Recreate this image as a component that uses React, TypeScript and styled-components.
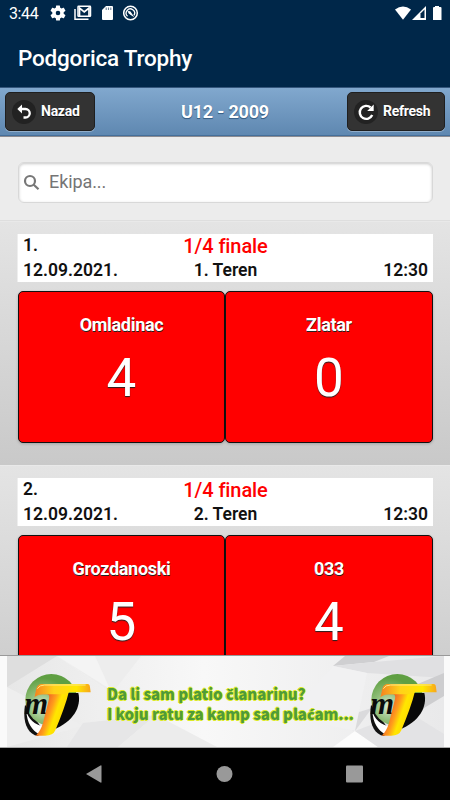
import React from "react";
import styled, { createGlobalStyle } from "styled-components";

const GlobalStyle = createGlobalStyle`
  * { box-sizing: border-box; }
  body { margin: 0; background: #000; font-family: Roboto, sans-serif; }
`;

const Screen = styled.div`
  width: 450px;
  height: 800px;
  overflow: hidden;
  display: flex;
  flex-direction: column;
`;

const StatusBar = styled.div`
  flex: none;
  height: 28px;
  padding: 0 7px 0 9px;
  background: #002749;
  color: #fff;
  display: flex;
  align-items: center;
  svg { display: block; flex: none; }
`;

const Clock = styled.span`
  width: 41px;
  font-size: 16px;
  line-height: 28px;
  letter-spacing: -0.4px;
`;

const StatusIcons = styled.div<{ $gap: number; $end?: boolean }>`
  display: flex;
  align-items: center;
  gap: ${(p) => p.$gap}px;
  margin-left: ${(p) => (p.$end ? "auto" : "0")};
  margin-top: -2px;
`;

const TitleBar = styled.div`
  flex: none;
  height: 59px;
  padding: 0 18px;
  background: #002749;
  color: #fff;
  font-size: 22.5px;
  font-weight: 500;
  line-height: 60px;
  letter-spacing: -0.2px;
`;

const Header = styled.header`
  flex: none;
  height: 50px;
  padding: 4px 5px 0 5px;
  display: grid;
  grid-template-columns: 1fr auto 1fr;
  border-top: 1px solid #35577d;
  border-bottom: 1px solid #8b8b91;
  box-shadow: inset 0 -1px 0 #456f9a;
  background: linear-gradient(#81a8ce, #5e87b0);
`;

const Heading = styled.h1`
  margin: 0;
  color: #fff;
  font-size: 18px;
  font-weight: 700;
  line-height: 40px;
  letter-spacing: -0.2px;
  text-shadow: 0 1px 1px #3e6790, 0 1px 0 #24405e;
`;

const ToolButton = styled.button<{ $width: number; $end?: boolean }>`
  width: ${(p) => p.$width}px;
  justify-self: ${(p) => (p.$end ? "end" : "start")};
  height: 39px;
  padding: 0 0 0 6px;
  display: flex;
  align-items: center;
  gap: 5px;
  border: 1px solid #1f1f1f;
  border-radius: 5px;
  background: #333;
  box-shadow: 0 1px 0 rgba(255, 255, 255, 0.3);
  color: #fff;
  font: 700 14px/36px Roboto, sans-serif;
  letter-spacing: -0.25px;
  text-shadow: 0 1px 0 #111;
`;

const ButtonLabel = styled.span`
  margin-top: -2px;
`;

const Disc = styled.span`
  flex: none;
  width: 24px;
  height: 24px;
  border-radius: 50%;
  background: #222;
  display: grid;
  place-items: center;
`;

const SearchArea = styled.div`
  flex: none;
  height: 84px;
  padding: 25px 17px 0 18px;
  background: #ececec;
  border-bottom: 1px solid #dedede;
`;

const SearchField = styled.label`
  height: 41px;
  padding-left: 4px;
  display: flex;
  align-items: center;
  gap: 9px;
  background: #fff;
  border: 1px solid #d8d8d8;
  border-radius: 6px;
  box-shadow: inset 0 1px 3px rgba(0, 0, 0, 0.22);
`;

const SearchInput = styled.input`
  flex: 1;
  min-width: 0;
  padding: 0;
  margin-top: -2px;
  border: 0;
  outline: 0;
  background: transparent;
  font: 400 18px Roboto, sans-serif;
  letter-spacing: -0.1px;
  color: #333;
  &::placeholder { color: #757575; opacity: 1; }
`;

const MatchList = styled.main`
  flex: 1;
  min-height: 0;
  overflow: hidden;
`;

const MatchItem = styled.section`
  height: 244px;
  padding: 12px 17px 0;
  border-top: 1px solid #e9e9e9;
  background: linear-gradient(#e4e4e4, #c9c9c9);
`;

const MatchInfo = styled.div`
  height: 48px;
  padding: 0 5px 0 5px;
  display: grid;
  grid-template-columns: 1fr 120px 1fr;
  grid-template-rows: 24px 24px;
  background: #fff;
  color: #111;
  font-size: 17.5px;
  font-weight: 600;
  line-height: 23px;
  border-left: 1px solid #eee;
`;

const Stage = styled.span`
  color: #f00;
  font-size: 20px;
  font-weight: 500;
  line-height: 25px;
  letter-spacing: -0.1px;
  text-align: center;
`;

const Cell = styled.span<{ $align?: string }>`
  text-align: ${(p) => p.$align || "left"};
  line-height: ${(p) => (p.$align ? "25px" : "23px")};
`;

const Teams = styled.div`
  margin-top: 9px;
  padding-left: 1px;
  display: grid;
  grid-template-columns: 207px 208px;
`;

const TeamCard = styled.div`
  height: 152px;
  padding-top: 22px;
  border: 1.400px solid #111;
  border-radius: 5px;
  background: #f00;
  box-shadow: 0 1px 3px rgba(0, 0, 0, 0.2);
  color: #fff;
  text-align: center;
  text-shadow: 0 1px 0 #222;
`;

const TeamName = styled.div`
  font-size: 18px;
  font-weight: 700;
  line-height: 22px;
  letter-spacing: -0.3px;
`;

const Score = styled.div`
  margin-top: 14px;
  font-size: 53px;
  line-height: 56px;
  text-shadow: 0 1px 1px #222;
`;

const Banner = styled.aside`
  flex: none;
  height: 93px;
  padding: 0 6px 0 7px;
  background: #fafafa;
  border-top: 1px solid #999;
  border-bottom: 1px solid #aaa;
`;

const BannerCanvas = styled.div`
  position: relative;
  height: 91px;
  display: flex;
  align-items: center;
  justify-content: space-between;
  padding: 0 6px 0 16px;
`;

const Facets = styled.svg`
  position: absolute;
  inset: 0;
  width: 100%;
  height: 100%;
`;

const LogoSvg = styled.svg`
  position: relative;
  display: block;
  flex: none;
  margin-top: 6px;
`;

const Slogan = styled.div`
  position: relative;
  margin-right: auto;
  margin-left: 15px;
  margin-top: 4px;
  color: #4f9a3a;
  font: 900 15px/20px "Noto Sans CJK SC", sans-serif;
  white-space: nowrap;
  text-shadow: 1px 0 0 #dcea28, -1px 0 0 #dcea28, 0 1px 0 #dcea28, 0 -1px 0 #dcea28;
`;

const SloganLine = styled.div`
  height: 20px;
  letter-spacing: -0.05px;
`;

const Accented = styled.span`
  font-family: "Open Sans", sans-serif;
  font-weight: 800;
  font-size: 14px;
`;

const NavBar = styled.nav`
  flex: none;
  height: 52px;
  padding: 0 85px 0 84px;
  display: flex;
  align-items: center;
  justify-content: space-between;
  background: #000;
`;

const matches = [
  { no: "1.", stage: "1/4 finale", date: "12.09.2021.", field: "1. Teren", time: "12:30", teams: [["Omladinac", "4"], ["Zlatar", "0"]] },
  { no: "2.", stage: "1/4 finale", date: "12.09.2021.", field: "2. Teren", time: "12:30", teams: [["Grozdanoski", "5"], ["033", "4"]] },
];

function ClubLogo({ id }: { id: string }) {
  return (
    <LogoSvg width="69" height="64" viewBox="70 85 207 192">
      <defs>
        <radialGradient id={`${id}-ball`} gradientUnits="userSpaceOnUse" cx="128" cy="185" r="85">
          <stop offset="0" stopColor="#dcebd4" />
          <stop offset="0.5" stopColor="#90be79" />
          <stop offset="1" stopColor="#5f9f42" />
        </radialGradient>
        <linearGradient id={`${id}-stem`} gradientUnits="userSpaceOnUse" x1="125" y1="215" x2="190" y2="238">
          <stop offset="0" stopColor="#f26a25" />
          <stop offset="0.3" stopColor="#ff9d1c" />
          <stop offset="0.55" stopColor="#ffe600" />
          <stop offset="1" stopColor="#ffd800" />
        </linearGradient>
        <linearGradient id={`${id}-bar`} x1="0" x2="1">
          <stop offset="0" stopColor="#f58220" />
          <stop offset="0.35" stopColor="#ffd21a" />
          <stop offset="0.75" stopColor="#ffe800" />
          <stop offset="1" stopColor="#f7a51b" />
        </linearGradient>
      </defs>
      <path d="M76 180C68 230 82 268 115 274L130 255Z" fill="#111" />
      <ellipse cx="155" cy="166" rx="78" ry="78" fill={`url(#${id}-ball)`} />
      <path d="M80 198C85 222 104 240 134 246L120 270C96 255 82 235 80 198Z" fill="#fff" />
      <path d="M195 145L236 145C246 185 222 232 160 255Z" fill="#080808" />
      <text x="74" y="209" fill="#0b0b0b" fontFamily="Liberation Serif, serif" fontSize="92" fontStyle="italic" fontWeight="700">m</text>
      <path d="M150 136H209C200 174 184 216 167 257Q160 274 134 273H108Q122 261 130 235L148 163Q151 149 141 149H106Z" fill={`url(#${id}-stem)`} />
      <path d="M126 118H264Q270 118 271 128L273 143H207L202 149H136C117 149 110 153 104 159L110 132Q114 118 126 118Z" fill={`url(#${id}-bar)`} />
      <path d="M113 132Q119 121 135 121H258" fill="none" stroke="#ffe984" strokeWidth="3" />
    </LogoSvg>
  );
}

function Match({ match }: { match: (typeof matches)[number] }) {
  return (
    <MatchItem>
      <MatchInfo>
        <Cell>{match.no}</Cell>
        <Stage>{match.stage}</Stage>
        <Cell />
        <Cell $align="left">{match.date}</Cell>
        <Cell $align="center">{match.field}</Cell>
        <Cell $align="right">{match.time}</Cell>
      </MatchInfo>
      <Teams>
        {match.teams.map(([name, score]) => (
          <TeamCard key={name}>
            <TeamName>{name}</TeamName>
            <Score>{score}</Score>
          </TeamCard>
        ))}
      </Teams>
    </MatchItem>
  );
}

export default function App() {
  return (
    <>
      <GlobalStyle />
      <Screen>
        <StatusBar>
          <Clock>3:44</Clock>
          <StatusIcons $gap={8}>
            <svg width="16" height="16" viewBox="1.500 1.500 21 21" fill="#fff">
              <path d="M19.430 12.980c.040-.320.070-.640.070-.980s-.030-.660-.070-.980l2.110-1.650c.190-.150.240-.420.120-.640l-2-3.460c-.120-.220-.390-.300-.610-.220l-2.490 1c-.520-.400-1.080-.730-1.690-.980l-.380-2.650A.49.49 0 0 0 14 2h-4c-.250 0-.460.180-.490.420l-.380 2.650c-.610.250-1.170.590-1.690.980l-2.490-1c-.230-.090-.490 0-.610.220l-2 3.460c-.130.220-.070.490.120.640l2.110 1.650c-.040.320-.070.650-.070.980s.030.660.070.980l-2.110 1.650c-.190.150-.240.420-.120.640l2 3.460c.120.220.390.300.610.220l2.490-1c.520.400 1.080.730 1.690.980l.380 2.650c.030.240.240.420.490.420h4c.250 0 .460-.180.490-.420l.380-2.650c.610-.250 1.170-.590 1.690-.980l2.490 1c.230.090.490 0 .610-.220l2-3.460c.120-.220.070-.490-.120-.640zM12 15a3 3 0 1 1 0-6 3 3 0 0 1 0 6z" />
            </svg>
            <svg width="18" height="16" viewBox="0 0 18 16" fill="none" stroke="#fff" strokeWidth="1.500">
              <path d="M1 4V14.300H14.500" />
              <rect x="4" y="1.300" width="12.500" height="10" rx="0.600" />
              <path d="M5.500 11V3L10.250 7L15 3V11" strokeWidth="1.700" />
            </svg>
            <svg width="15" height="16" viewBox="0 0 15 16">
              <path d="M6 1H12Q13 1 13 2V14Q13 15 12 15H3Q2 15 2 14V5Z" fill="#fff" />
              <path d="M6.200 2.500V5M8.500 2.500V5M10.800 2.500V5" stroke="#6d8297" strokeWidth="1.100" />
            </svg>
            <svg width="16" height="16" viewBox="0.500 0 16 16" fill="none" stroke="#fff" strokeWidth="1.500">
              <circle cx="8" cy="8" r="6.800" />
              <path d="M5 11.200A4.200 4.200 0 1 1 11.500 10.300" strokeWidth="1.300" />
              <path d="M5.300 6.300Q8 5.500 9 8L11.800 12.300L7.800 9.800Q5.300 8.500 5.300 6.300Z" fill="#fff" stroke="none" />
            </svg>
          </StatusIcons>
          <StatusIcons $gap={0} $end>
            <svg width="18" height="16" viewBox="0 0 18 16">
              <path d="M1 4.500Q9 -1.500 17 4.500L9 14.800Z" fill="#fff" />
            </svg>
            <svg width="15" height="16" viewBox="0 0 15 16">
              <path d="M0 15L14 1V15Z" fill="#fff" />
              <path d="M8.500 13V8.500L12.500 4.500V13Z" fill="#002749" />
            </svg>
            <svg width="16" height="16" viewBox="-2 0 16 16">
              <path d="M6 1H10V2H11.500Q12.500 2 12.500 3V15H4V3Q4 2 5 2H6Z" fill="#fff" />
            </svg>
          </StatusIcons>
        </StatusBar>
        <TitleBar>Podgorica Trophy</TitleBar>
        <Header>
          <ToolButton $width={90}>
            <Disc>
              <svg width="16" height="18" viewBox="0 0 16 18" fill="none" stroke="#fff" strokeWidth="2.300">
                <path d="M5 6H9.500A4 4 0 0 1 9.500 14.500H7.500" />
                <path d="M6 1.500L1.300 6L6 10.500Z" fill="#fff" stroke="none" />
              </svg>
            </Disc>
            <ButtonLabel>Nazad</ButtonLabel>
          </ToolButton>
          <Heading>U12 - 2009</Heading>
          <ToolButton $width={98} $end>
            <Disc>
              <svg width="18" height="18" viewBox="0 0 18 18" fill="none" stroke="#fff" strokeWidth="2.400">
                <path d="M15.200 12A6.500 6.500 0 1 1 13.600 4.500" />
                <path d="M16.700 1.500V8H10.200Z" fill="#fff" stroke="none" />
              </svg>
            </Disc>
            <ButtonLabel>Refresh</ButtonLabel>
          </ToolButton>
        </Header>
        <SearchArea>
          <SearchField>
            <svg width="17" height="17" viewBox="0 0 17 17" fill="none" stroke="#777" strokeWidth="2.200">
              <circle cx="7" cy="7" r="5" />
              <path d="M10.500 10.500L15.500 15.200" />
            </svg>
            <SearchInput placeholder="Ekipa..." />
          </SearchField>
        </SearchArea>
        <MatchList>
          {matches.map((m) => (
            <Match key={m.no} match={m} />
          ))}
        </MatchList>
        <Banner>
          <BannerCanvas>
            <Facets viewBox="0 0 437 91" preserveAspectRatio="none">
              <defs>
                <linearGradient id="paper" x1="0" x2="1">
                  <stop offset="0" stopColor="#e7e7e7" />
                  <stop offset="0.45" stopColor="#f8f8f8" />
                  <stop offset="1" stopColor="#e9e9ea" />
                </linearGradient>
              </defs>
              <rect width="437" height="91" fill="url(#paper)" />
              <path d="M0 0H50L0 31Z" fill="#dedede" />
              <path d="M50 0H90L105 37Z" fill="#f4f4f4" />
              <path d="M50 0L105 37L134 0H88L103 33Z" fill="#ededed" />
              <path d="M0 31L76 70L0 91Z" fill="#eee" />
              <path d="M76 67L149 59L111 91H60Z" fill="#e6e6e7" />
              <path d="M149 59L210 91H111Z" fill="#ececec" />
              <path d="M338 0H382L367 6L326 10Z" fill="#cfcfd1" />
              <path d="M326 10L367 6L437 0V22L360 17Z" fill="#e0e0e2" />
              <path d="M394 35L437 17V40L402 61Z" fill="#cdcdcf" />
              <path d="M320 66L365 52L348 75Z" fill="#dadadc" />
              <path d="M348 75L326 91H371Z" fill="#fcfcfc" />
              <path d="M348 75L400 55L437 78V91H371Z" fill="#e3e3e5" />
              <path d="M280 60L326 10L360 17L348 75Z" fill="#f1f1f2" />
            </Facets>
            <ClubLogo id="left" />
            <Slogan>
              <SloganLine>Da li sam platio <Accented>č</Accented>lanarinu?</SloganLine>
              <SloganLine>I koju ratu za kamp sad pla<Accented>ć</Accented>am...</SloganLine>
            </Slogan>
            <ClubLogo id="right" />
          </BannerCanvas>
        </Banner>
        <NavBar>
          <svg width="18" height="20" viewBox="0 0 18 20">
            <path d="M2 10L16.500 1.500Q17.500 1 17.500 2V18Q17.500 19 16.500 18.500Z" fill="#999" />
          </svg>
          <svg width="18" height="18" viewBox="0 0 18 18">
            <circle cx="9.500" cy="9" r="8" fill="#999" />
          </svg>
          <svg width="20" height="20" viewBox="0 0 20 20">
            <rect x="1" y="1.500" width="17" height="17" rx="1" fill="#999" />
          </svg>
        </NavBar>
      </Screen>
    </>
  );
}
